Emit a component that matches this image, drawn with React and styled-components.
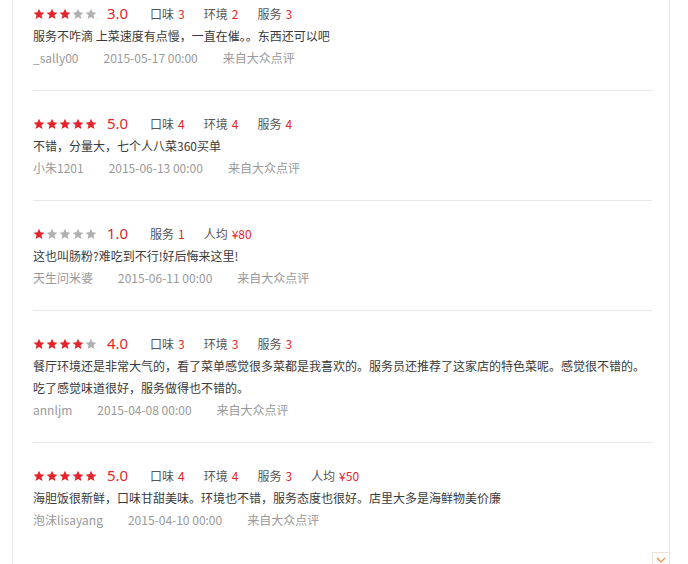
import React from 'react'
import styled, { createGlobalStyle } from 'styled-components';

const GlobalStyle = createGlobalStyle`
  html, body {
    margin: 0;
    padding: 0;
    background: #fff;
    overflow: hidden;
  }
  body {
    font-family: "Noto Sans CJK SC", "Noto Sans", sans-serif;
    color: #333;
  }
`;

const reviews = [
  {
    stars: 3,
    scores: [["口味", "3"], ["环境", "2"], ["服务", "3"]],
    text: ["服务不咋滴 上菜速度有点慢，一直在催。。东西还可以吧"],
    user: "_sally00",
    date: "2015-05-17 00:00",
  },
  {
    stars: 5,
    scores: [["口味", "4"], ["环境", "4"], ["服务", "4"]],
    text: ["不错，分量大，七个人八菜360买单"],
    user: "小朱1201",
    date: "2015-06-13 00:00",
  },
  {
    stars: 1,
    scores: [["服务", "1"], ["人均", "¥80"]],
    text: ["这也叫肠粉?难吃到不行!好后悔来这里!"],
    user: "天生问米婆",
    date: "2015-06-11 00:00",
  },
  {
    stars: 4,
    scores: [["口味", "3"], ["环境", "3"], ["服务", "3"]],
    text: [
      "餐厅环境还是非常大气的，看了菜单感觉很多菜都是我喜欢的。服务员还推荐了这家店的特色菜呢。感觉很不错的。",
      "吃了感觉味道很好，服务做得也不错的。",
    ],
    user: "annljm",
    date: "2015-04-08 00:00",
  },
  {
    stars: 5,
    scores: [["口味", "4"], ["环境", "4"], ["服务", "3"], ["人均", "¥50"]],
    text: ["海胆饭很新鲜，口味甘甜美味。环境也不错，服务态度也很好。店里大多是海鲜物美价廉"],
    user: "泡沫lisayang",
    date: "2015-04-10 00:00",
  },
];

function Star({ on }) {
  return (
    <StarIcon viewBox="0 0 24 24" $on={on}>
      <path d="M12 1.5l3.2 7.1 7.6.7-5.8 5.1 1.8 7.6L12 18l-6.8 4 1.8-7.6L1.2 9.3l7.6-.7z" />
    </StarIcon>
  )
}

function App() {
  return (
    <>
      <GlobalStyle />
      <Page>
        <Container>
          {reviews.map((r, i) => (
            <Item key={i} $first={i === 0} $last={i === reviews.length - 1}>
              <RatingRow>
                <Stars>
                  {[1, 2, 3, 4, 5].map(n => <Star key={n} on={n <= r.stars} />)}
                </Stars>
                <Score>{r.stars}.0</Score>
                <Scores>
                  {r.scores.map(([label, val]) => (
                    <ScoreItem key={label}>
                      {label}<b>{val}</b>
                    </ScoreItem>
                  ))}
                </Scores>
              </RatingRow>
              <Text>
                {r.text.map((t, j) => (
                  <React.Fragment key={j}>
                    {j > 0 && <br />}
                    {t}
                  </React.Fragment>
                ))}
              </Text>
              <Meta>
                <span>{r.user}</span>
                <span>{r.date}</span>
                <span>来自大众点评</span>
              </Meta>
            </Item>
          ))}
        </Container>
        <TopButton>
          <svg width="10" height="6" viewBox="0 0 10 6">
            <path d="M1 1l4 4 4-4" fill="none" stroke="#f08a3c" strokeWidth="1.2" />
          </svg>
        </TopButton>
      </Page>
    </>
  )
}

const Page = styled.div`
  position: relative;
  height: 564px;
  padding-left: 12px;
  box-sizing: border-box;
`;

const Container = styled.div`
  width: 658px;
  height: 100%;
  box-sizing: border-box;
  border-left: 1px solid #e6e6e6;
  border-right: 1px solid #e6e6e6;
  padding: 0 17px 0 20px;
`;

const Item = styled.div`
  padding: ${p => (p.$first ? "2px" : "21px")} 0 21px;
  border-bottom: ${p => (p.$last ? "none" : "1px solid #e8e8e8")};
`;

const RatingRow = styled.div`
  display: flex;
  align-items: center;
  height: 23px;
`;

const Stars = styled.div`
  display: flex;
  gap: 1px;
`;

const StarIcon = styled.svg`
  width: 12px;
  height: 12px;
  fill: ${p => (p.$on ? "#e4262c" : "#b0b0b0")};
`;

const Score = styled.span`
  margin-left: 10px;
  width: 43px;
  font-size: 15px;
  color: #e4262c;
  line-height: 23px;
  font-family: "Noto Sans", "Noto Sans CJK SC", sans-serif;
`;

const Scores = styled.div`
  display: flex;
  gap: 19px;
  font-size: 12px;
  color: #555;
  line-height: 23px;
`;

const ScoreItem = styled.span`
  b {
    font-weight: 400;
    color: #e4262c;
    margin-left: 4px;
  }
`;

const Text = styled.div`
  font-size: 12px;
  line-height: 22px;
  color: #3a3a3a;
`;

const Meta = styled.div`
  display: flex;
  gap: 25px;
  font-size: 12px;
  line-height: 22px;
  color: #999;
`;

const TopButton = styled.div`
  position: absolute;
  left: 652px;
  top: 552px;
  width: 18px;
  height: 22px;
  box-sizing: border-box;
  border: 1px solid #eee2d6;
  background: #fff;
  display: flex;
  justify-content: center;
  padding-top: 4px;
`;

export default App;
